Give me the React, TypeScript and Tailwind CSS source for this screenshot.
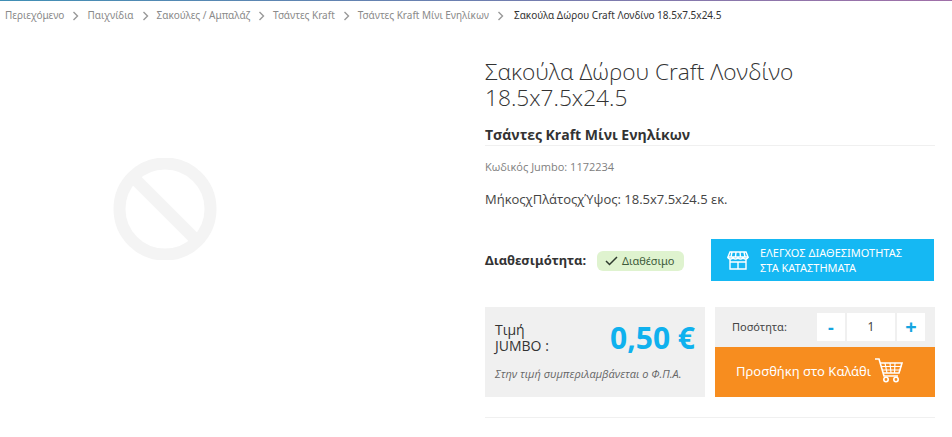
export default function App() {
  const crumbs = ["Περιεχόμενο", "Παιχνίδια", "Σακούλες / Αμπαλάζ", "Τσάντες Kraft", "Τσάντες Kraft Μίνι Ενηλίκων"];
  return (
    <div className="w-[952px] h-[437px] overflow-hidden bg-white font-['Open_Sans',sans-serif] text-[#333]">
      <div className="h-px bg-gradient-to-r from-[#3f8fb5] via-[#6d7fb0] to-[#a06fa8]" />
      <nav className="h-[29px] pl-[5px] flex items-center text-[10px] text-[#8a8a8a] font-['Noto_Sans',sans-serif]">
        {crumbs.map((c) => (
          <span key={c} className="flex items-center">
            <span>{c}</span>
            <svg width="23" height="10" viewBox="0 0 23 10" fill="none" stroke="#999" strokeWidth="1.4"><path d="M9.500 1l4 4-4 4" /></svg>
          </span>
        ))}
        <span className="ml-[2px] text-[#333]">Σακούλα Δώρου Craft Λονδίνο 18.5x7.5x24.5</span>
      </nav>
      <div className="flex">
        <div className="w-[485px] pt-[128px] pl-[113px]">
          <svg width="104" height="102" viewBox="0 0 104 102" fill="none" stroke="#f4f4f4" strokeWidth="12">
            <circle cx="52" cy="51" r="45.500" />
            <path d="M20 19l64 64" />
          </svg>
        </div>
        <div className="w-[450px] pt-[29px]">
          <h1 className="text-[22.7px] leading-[26px] font-light text-[#333]">Σακούλα Δώρου Craft Λονδίνο<br />18.5x7.5x24.5</h1>
          <h2 className="mt-[14px] text-[14px] leading-[20px] font-bold border-b border-[#f0f0f0]">Τσάντες Kraft Μίνι Ενηλίκων</h2>
          <p className="mt-[13px] text-[11px] leading-[16px] text-[#808080]">Κωδικός Jumbo: 1172234</p>
          <p className="mt-[14px] text-[13px] leading-[20px] text-[#444]">ΜήκοςχΠλάτοςχΎψος: 18.5x7.5x24.5 εκ.</p>
          <div className="mt-[30px] flex items-center h-[42px]">
            <span className="mt-[2px] w-[112px] text-[13px] font-bold font-['Noto_Sans',sans-serif]">Διαθεσιμότητα:</span>
            <span className="mt-[2px] w-[87px] h-[20px] rounded-[6px] bg-[#dff3cf] flex items-center pl-[8px] gap-[4px] text-[11px] text-[#3d5a3a] font-['Noto_Sans',sans-serif]">
              <svg width="13" height="10" viewBox="0 0 13 10" fill="none" stroke="#2f3b2f" strokeWidth="1.5"><path d="M1 5l3.500 3.500L12 1" /></svg>
              Διαθέσιμο
            </span>
            <button className="ml-[27px] w-[223px] h-[42px] bg-[#15b8f3] text-white flex items-center pl-[16px] gap-[11px] text-[11px] leading-[15px] text-left font-['Noto_Sans',sans-serif]">
              <svg width="22" height="20" viewBox="0 0 22 20" fill="none" stroke="#fff" strokeWidth="1.4">
                <path d="M3 2h16l2 5H1z" />
                <path d="M5 2L4 7M9 2L8.500 7M13 2l.5 5M17 2l1 5" />
                <path d="M1 7a2.500 2 0 0 0 5 0a2.500 2 0 0 0 5 0a2.500 2 0 0 0 5 0a2.500 2 0 0 0 5 0" />
                <path d="M3 9v10h16V9M3 12h16M11 12v7" />
              </svg>
              <span>ΕΛΕΓΧΟΣ ΔΙΑΘΕΣΙΜΟΤΗΤΑΣ<br />ΣΤΑ ΚΑΤΑΣΤΗΜΑΤΑ</span>
            </button>
          </div>
          <div className="mt-[26px] flex gap-[10px]">
            <div className="w-[220px] h-[90px] bg-[#f0f0f0] pl-[10px] pr-[10px] pt-[15px]">
              <div className="flex items-center justify-between">
                <span className="text-[14px] leading-[16px]">Τιμή<br />JUMBO :</span>
                <span className="text-[30px] leading-[32px] font-bold text-[#0fb1ee]">0,50 €</span>
              </div>
              <p className="mt-[13px] text-[11px] leading-[14px] italic text-[#666]">Στην τιμή συμπεριλαμβάνεται ο Φ.Π.Α.</p>
            </div>
            <div className="w-[220px]">
              <div className="h-[40px] bg-[#f0f0f0] flex items-center pl-[17px] font-['Noto_Sans',sans-serif]">
                <span className="w-[85px] text-[11px] text-[#444]">Ποσότητα:</span>
                <div className="flex gap-[2px] text-[#444]">
                  <span className="w-[28px] h-[28px] bg-white flex items-center justify-center text-[#15a5e0] text-[18px] font-bold">-</span>
                  <span className="w-[48px] h-[28px] bg-white flex items-center justify-center text-[12px]">1</span>
                  <span className="w-[28px] h-[28px] bg-white flex items-center justify-center text-[#15a5e0] text-[20px] font-bold">+</span>
                </div>
              </div>
              <button className="w-full h-[50px] bg-[#f78d1f] text-white flex items-center pl-[21px] text-[13px] font-['Noto_Sans',sans-serif]">
                <span>Προσθήκη στο Καλάθι</span>
                <svg className="ml-[3px] mb-[3px]" width="29" height="25" viewBox="0 0 29 25" fill="none" stroke="#fff" strokeWidth="1.6">
                  <path d="M1 1h4l5 17h14" />
                  <path d="M6 5h22l-3 10H9" />
                  <path d="M11 5l2 10M16 5l1 10M21 5l-.5 10M7.500 8.500h20M8.500 12h18" strokeWidth="1.200" />
                  <circle cx="12" cy="21.500" r="2.200" />
                  <circle cx="22" cy="21.500" r="2.200" />
                </svg>
              </button>
            </div>
          </div>
          <div className="mt-[20px] border-t border-[#f0f0f0]" />
        </div>
      </div>
    </div>
  );
}
